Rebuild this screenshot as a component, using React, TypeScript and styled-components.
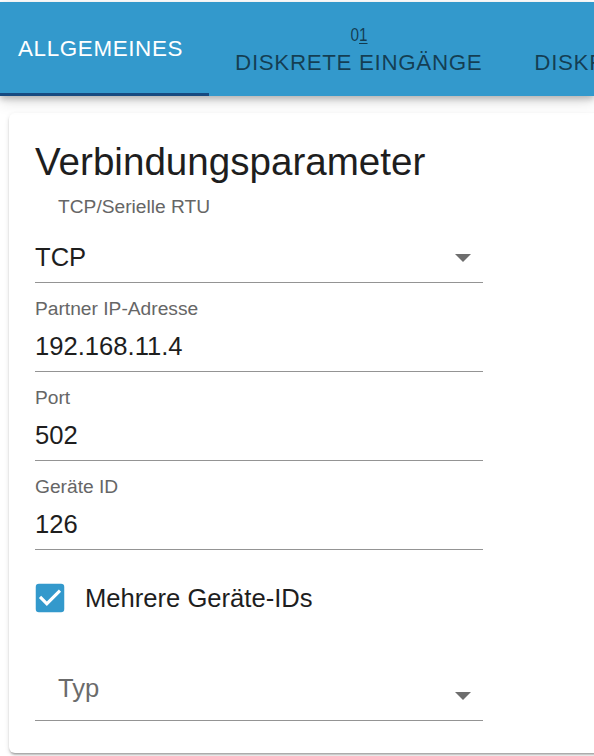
import React from "react";
import styled, { createGlobalStyle } from "styled-components";

const Global = createGlobalStyle`
  html, body {
    margin: 0;
    padding: 0;
    background: #ffffff;
    overflow: hidden;
  }
  body {
    font-family: "Liberation Sans", Arial, Helvetica, sans-serif;
    -webkit-font-smoothing: antialiased;
  }
  * { box-sizing: border-box; }
`;

const Page = styled.div`
  width: 594px;
  height: 756px;
  padding-top: 2px;
  overflow: hidden;
  display: flex;
  flex-direction: column;
`;

const TabBar = styled.div`
  height: 94px;
  flex-shrink: 0;
  display: flex;
  background: #3399cc;
  box-shadow: 0 3px 6px rgba(0, 0, 0, 0.22), 0 6px 14px rgba(0, 0, 0, 0.12);
  position: relative;
  z-index: 2;
  overflow: hidden;
`;

const Tab = styled.div<{ $active?: boolean; $padLeft?: number }>`
  position: relative;
  flex-shrink: 0;
  display: flex;
  flex-direction: column;
  align-items: center;
  justify-content: ${(p) => (p.$active ? "center" : "flex-end")};
  padding: ${(p) => (p.$active ? "0 26px 0 " + (p.$padLeft ?? 26) + "px" : "0 26px 19px")};
  font-size: 22.4px;
  line-height: 28px;
  letter-spacing: 0.64px;
  text-transform: uppercase;
  white-space: nowrap;
  color: ${(p) => (p.$active ? "#ffffff" : "rgba(0, 0, 0, 0.6)")};

  &::after {
    content: "";
    display: ${(p) => (p.$active ? "block" : "none")};
    position: absolute;
    left: 0;
    right: 0;
    bottom: 0;
    height: 3px;
    background: #174a80;
  }
`;

const TabIcon = styled.span`
  display: block;
  font-size: 18px;
  line-height: 18px;
  letter-spacing: 0;
  transform: scaleX(0.85);
  margin-bottom: 5px;
  color: rgba(0, 0, 0, 0.62);

  u {
    text-decoration-thickness: 1px;
    text-underline-offset: 2px;
  }
`;

const Card = styled.div`
  margin: 17px 0 0 9px;
  width: 640px;
  background: #ffffff;
  border-radius: 6px;
  box-shadow: 0 3px 2px -2px rgba(0, 0, 0, 0.2), 0 2px 2px rgba(0, 0, 0, 0.14),
    0 2px 5px rgba(0, 0, 0, 0.12);
  padding: 26px 26px 32px;
  display: flex;
  flex-direction: column;
  align-items: flex-start;
`;

const Title = styled.h2`
  margin: 0;
  font-size: 38.6px;
  line-height: 46px;
  font-weight: 400;
  color: #1e1e1e;
`;

const Field = styled.div<{ $top?: number }>`
  position: relative;
  width: 448px;
  padding-top: ${(p) => p.$top ?? 14}px;
  border-bottom: 1px solid #949494;
  display: flex;
  flex-direction: column;
`;

const Label = styled.div<{ $indent?: boolean; $gap?: number }>`
  font-size: 19.2px;
  line-height: 24px;
  color: #666666;
  padding-left: ${(p) => (p.$indent ? 23 : 0)}px;
  margin-bottom: ${(p) => p.$gap ?? 7}px;
`;

const Value = styled.div<{ $placeholder?: boolean }>`
  font-size: 25.6px;
  line-height: 36px;
  color: ${(p) => (p.$placeholder ? "#6b6b6b" : "#1e1e1e")};
  padding-left: ${(p) => (p.$placeholder ? 23 : 0)}px;
  padding-bottom: ${(p) => (p.$placeholder ? 14 : 7)}px;
`;

const Arrow = styled.svg`
  position: absolute;
  right: 12px;
  bottom: 20px;
`;

const CheckRow = styled.label`
  margin-top: 30px;
  height: 36px;
  display: flex;
  align-items: center;
  gap: 16px;
  font-size: 25.6px;
  line-height: 36px;
  color: #1e1e1e;
`;

const CheckIcon = styled.svg`
  margin-left: -4px;
  flex-shrink: 0;
`;

const DropArrow = () => (
  <Arrow width="16" height="8" viewBox="0 0 16 8">
    <path d="M0 0 L16 0 L8 8 Z" fill="#6e6e6e" />
  </Arrow>
);

export default function App() {
  return (
    <>
      <Global />
      <Page>
        <TabBar>
          <Tab $active $padLeft={18}>Allgemeines</Tab>
          <Tab>
            <TabIcon>
              0<u>1</u>
            </TabIcon>
            Diskrete Eingänge
          </Tab>
          <Tab>
            <TabIcon>
              0<u>1</u>
            </TabIcon>
            Diskrete Ausgänge
          </Tab>
        </TabBar>
        <Card>
          <Title>Verbindungsparameter</Title>
          <Field $top={10}>
            <Label $indent $gap={20}>
              TCP/Serielle RTU
            </Label>
            <Value>TCP</Value>
            <DropArrow />
          </Field>
          <Field>
            <Label>Partner IP-Adresse</Label>
            <Value>192.168.11.4</Value>
          </Field>
          <Field>
            <Label>Port</Label>
            <Value>502</Value>
          </Field>
          <Field>
            <Label>Geräte ID</Label>
            <Value>126</Value>
          </Field>
          <CheckRow>
            <CheckIcon width="38" height="38" viewBox="0 0 24 24">
              <rect x="3" y="3" width="18" height="18" rx="2" fill="#3399cc" />
              <path
                d="M10 17l-5-5 1.41-1.41L10 14.17l7.59-7.59L19 8l-9 9z"
                fill="#ffffff"
              />
            </CheckIcon>
            Mehrere Geräte-IDs
          </CheckRow>
          <Field $top={54}>
            <Value $placeholder>Typ</Value>
            <DropArrow />
          </Field>
        </Card>
      </Page>
    </>
  );
}
